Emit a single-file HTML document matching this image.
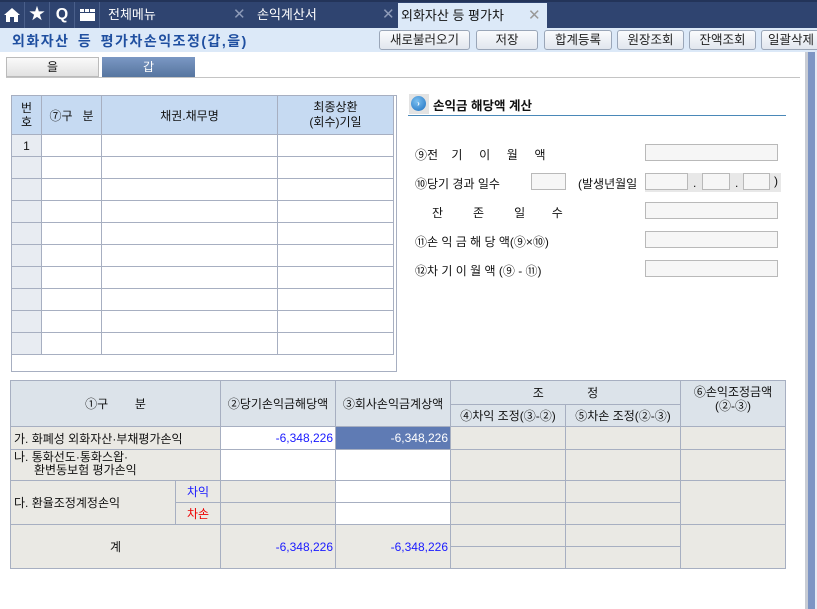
<!DOCTYPE html>
<html><head><meta charset="utf-8"><style>
*{margin:0;padding:0;box-sizing:border-box}
body{width:817px;height:609px;position:relative;overflow:hidden;background:#fff;font-family:"Liberation Sans","Noto Sans CJK KR","NanumGothic",sans-serif;font-size:12px;color:#111}
.a{position:absolute}
.top{left:0;top:0;width:817px;height:28px;background:#2f4470;border-top:2px solid #233459}
.ic{top:2px;width:25px;height:26px;border-right:1px solid #4a5f8a;color:#fff;font-weight:bold;font-size:16px;text-align:center;line-height:25px}
.tab{top:2px;height:26px;color:#fff;font-size:13px;line-height:26px}
.x{color:#8d9bb8;font-size:15px;top:2px;line-height:26px}
.bar{left:0;top:28px;width:817px;height:24px;background:#dce9f8}
.btn{top:30px;height:20px;border:1px solid #9aa6b8;border-radius:3px;background:linear-gradient(#fafbfd,#e1e6ee);font-size:12.5px;text-align:center;line-height:18px;color:#222}
table{border-collapse:collapse;position:absolute;table-layout:fixed}
td{border:1px solid #a7afc1;padding:0;white-space:nowrap;overflow:hidden}
.g td{height:22px}
.lbl{font-size:12px;letter-spacing:0}
.inp{height:17px;border:1px solid #b9b9b9;background:#f6f6f6}
.bt td{background:#eae9e4}
.bt .h{background:#dce3ea;text-align:center}
.bt .w{background:#fff}
.num{color:#1a1aff;text-align:right;padding-right:2px}
</style></head><body>
<div class="a top"></div>
<div class="a ic" style="left:0"><svg width="16" height="14" viewBox="0 0 16 14" style="margin-top:6px"><path d="M8 0L0 7h2v7h4V9h4v5h4V7h2z" fill="#fff"/></svg></div>
<div class="a ic" style="left:25px">★</div>
<div class="a ic" style="left:50px">Q</div>
<div class="a ic" style="left:75px"><svg width="15" height="12" viewBox="0 0 15 12" style="margin-top:7px"><rect x="0" y="0" width="15" height="12" fill="#fff"/><rect x="4" y="0" width="1" height="3" fill="#2f4470"/><rect x="9" y="0" width="1" height="3" fill="#2f4470"/><rect x="0" y="3" width="15" height="1" fill="#2f4470"/></svg></div>
<div class="a tab" style="left:108px">전체메뉴</div>
<div class="a x" style="left:233px">✕</div>
<div class="a tab" style="left:257px">손익계산서</div>
<div class="a x" style="left:382px">✕</div>
<div class="a" style="left:398px;top:3px;width:149px;height:25px;background:#dce9f8"></div>
<div class="a tab" style="left:401px;color:#111;top:3px;line-height:25px">외화자산 등 평가차</div>
<div class="a x" style="left:528px;top:3px;line-height:25px;color:#999">✕</div>
<div class="a bar"></div>
<div class="a" style="left:12px;top:31px;font-weight:bold;color:#1f4fa0;font-size:14px;letter-spacing:1.5px;word-spacing:3px">외화자산 등 평가차손익조정(갑,을)</div>
<div class="a btn" style="left:379px;width:91px">새로불러오기</div>
<div class="a btn" style="left:476px;width:62px">저장</div>
<div class="a btn" style="left:544px;width:68px">합계등록</div>
<div class="a btn" style="left:617px;width:67px">원장조회</div>
<div class="a btn" style="left:689px;width:67px">잔액조회</div>
<div class="a btn" style="left:761px;width:60px">일괄삭제</div>
<div class="a" style="left:805px;top:52px;width:12px;height:557px;background:#7d95c4;border-left:3px solid #c8ccd4;border-right:2px solid #e6ebf5"></div>
<div class="a" style="left:6px;top:57px;width:93px;height:20px;border:1px solid #bbb;background:linear-gradient(#fafafa,#e2e2e2);text-align:center;line-height:18px">을</div>
<div class="a" style="left:102px;top:57px;width:93px;height:20px;background:linear-gradient(#7b98c4,#56759f);color:#fff;text-align:center;line-height:20px">갑</div>
<div class="a" style="left:6px;top:77px;width:794px;height:1px;background:#c4c4c4"></div>

<div class="a" style="left:11px;top:95px;width:386px;height:277px;border:1px solid #a7afc1"></div>
<table class="g" style="left:11px;top:95px;width:383px">
<colgroup><col style="width:30px"><col style="width:60px"><col style="width:176px"><col></colgroup>
<tr style="background:#c6daf2;text-align:center"><td style="height:39px;line-height:14px">번<br>호</td><td>⑦구&nbsp;&nbsp;&nbsp;분</td><td>채권.채무명</td><td style="line-height:15px">최종상환<br>(회수)기일</td></tr>
<tr><td style="background:#e8ecf2;text-align:center">1</td><td></td><td></td><td></td></tr>
<tr><td style="background:#e8ecf2"></td><td></td><td></td><td></td></tr>
<tr><td style="background:#e8ecf2"></td><td></td><td></td><td></td></tr>
<tr><td style="background:#e8ecf2"></td><td></td><td></td><td></td></tr>
<tr><td style="background:#e8ecf2"></td><td></td><td></td><td></td></tr>
<tr><td style="background:#e8ecf2"></td><td></td><td></td><td></td></tr>
<tr><td style="background:#e8ecf2"></td><td></td><td></td><td></td></tr>
<tr><td style="background:#e8ecf2"></td><td></td><td></td><td></td></tr>
<tr><td style="background:#e8ecf2"></td><td></td><td></td><td></td></tr>
<tr><td style="background:#e8ecf2"></td><td></td><td></td><td></td></tr>
</table>

<div class="a" style="left:409px;top:94px;width:20px;height:20px;background:#e3e3e3"></div>
<div class="a" style="left:411px;top:96px;width:15px;height:15px;border-radius:50%;background:radial-gradient(circle at 40% 35%,#7cc0f0,#1c6fc0);color:#fff;font-size:8px;text-align:center;line-height:15px;font-weight:bold">›</div>
<div class="a" style="left:433px;top:95px;font-weight:bold;font-size:12.5px">손익금 해당액 계산</div>
<div class="a" style="left:408px;top:115px;width:378px;height:1px;background:#4a88b8"></div>

<div class="a lbl" style="left:415px;top:146px">⑨전&nbsp;&nbsp;&nbsp;&nbsp;기&nbsp;&nbsp;&nbsp;&nbsp;&nbsp;이&nbsp;&nbsp;&nbsp;&nbsp;&nbsp;월&nbsp;&nbsp;&nbsp;&nbsp;&nbsp;액</div>
<div class="a inp" style="left:645px;top:144px;width:133px"></div>
<div class="a lbl" style="left:415px;top:175px">⑩당기 경과 일수</div>
<div class="a inp" style="left:531px;top:173px;width:35px"></div>
<div class="a lbl" style="left:578px;top:175px">(발생년월일</div>
<div class="a" style="left:645px;top:173px;width:136px;height:19px;background:#e8e8e8"></div>
<div class="a inp" style="left:645px;top:173px;width:43px"></div>
<div class="a" style="left:693px;top:176px">.</div>
<div class="a inp" style="left:702px;top:173px;width:28px"></div>
<div class="a" style="left:735px;top:176px">.</div>
<div class="a inp" style="left:743px;top:173px;width:27px"></div>
<div class="a" style="left:774px;top:174px">)</div>
<div class="a lbl" style="left:432px;top:204px">잔&nbsp;&nbsp;&nbsp;&nbsp;&nbsp;&nbsp;&nbsp;&nbsp;&nbsp;존&nbsp;&nbsp;&nbsp;&nbsp;&nbsp;&nbsp;&nbsp;&nbsp;&nbsp;일&nbsp;&nbsp;&nbsp;&nbsp;&nbsp;&nbsp;&nbsp;&nbsp;수</div>
<div class="a inp" style="left:645px;top:202px;width:133px"></div>
<div class="a lbl" style="left:415px;top:233px">⑪손 익 금 해 당 액(⑨×⑩)</div>
<div class="a inp" style="left:645px;top:231px;width:133px"></div>
<div class="a lbl" style="left:415px;top:262px">⑫차 기 이 월 액 (⑨ - ⑪)</div>
<div class="a inp" style="left:645px;top:260px;width:133px"></div>

<table class="bt" style="left:10px;top:380px;width:775px">
<colgroup><col style="width:165px"><col style="width:45px"><col style="width:115px"><col style="width:115px"><col style="width:115px"><col style="width:115px"><col style="width:105px"></colgroup>
<tr><td class="h" colspan="2" rowspan="2" style="height:46px">①구&nbsp;&nbsp;&nbsp;&nbsp;&nbsp;&nbsp;&nbsp;&nbsp;분</td><td class="h" rowspan="2">②당기손익금해당액</td><td class="h" rowspan="2">③회사손익금계상액</td><td class="h" colspan="2" style="height:24px">조&nbsp;&nbsp;&nbsp;&nbsp;&nbsp;&nbsp;&nbsp;&nbsp;&nbsp;&nbsp;&nbsp;&nbsp;&nbsp;정</td><td class="h" rowspan="2" style="line-height:14px;vertical-align:top;padding-top:4px">⑥손익조정금액<br>(②-③)</td></tr>
<tr><td class="h" style="height:22px">④차익 조정(③-②)</td><td class="h">⑤차손 조정(②-③)</td></tr>
<tr><td colspan="2" style="height:23px;padding-left:3px">가. 화폐성 외화자산·부채평가손익</td><td class="w num">-6,348,226</td><td class="num" style="background:#5f7bb4;color:#fff">-6,348,226</td><td></td><td></td><td></td></tr>
<tr><td colspan="2" style="height:31px;padding-left:3px;line-height:13px;vertical-align:top;padding-top:1px">나. 통화선도·통화스왑·<br>&nbsp;&nbsp;&nbsp;&nbsp;&nbsp;&nbsp;환변동보험 평가손익</td><td class="w"></td><td class="w"></td><td></td><td></td><td></td></tr>
<tr><td rowspan="2" style="padding-left:3px">다. 환율조정계정손익</td><td style="height:22px;text-align:center;color:#1a1aff">차익</td><td></td><td class="w"></td><td></td><td></td><td rowspan="2"></td></tr>
<tr><td style="height:22px;text-align:center;color:#e00">차손</td><td></td><td class="w"></td><td></td><td></td></tr>
<tr><td colspan="2" rowspan="2" style="text-align:center">계</td><td rowspan="2" class="num">-6,348,226</td><td rowspan="2" class="num">-6,348,226</td><td style="height:22px"></td><td></td><td rowspan="2"></td></tr>
<tr><td style="height:22px"></td><td></td></tr>
</table>
</body></html>
